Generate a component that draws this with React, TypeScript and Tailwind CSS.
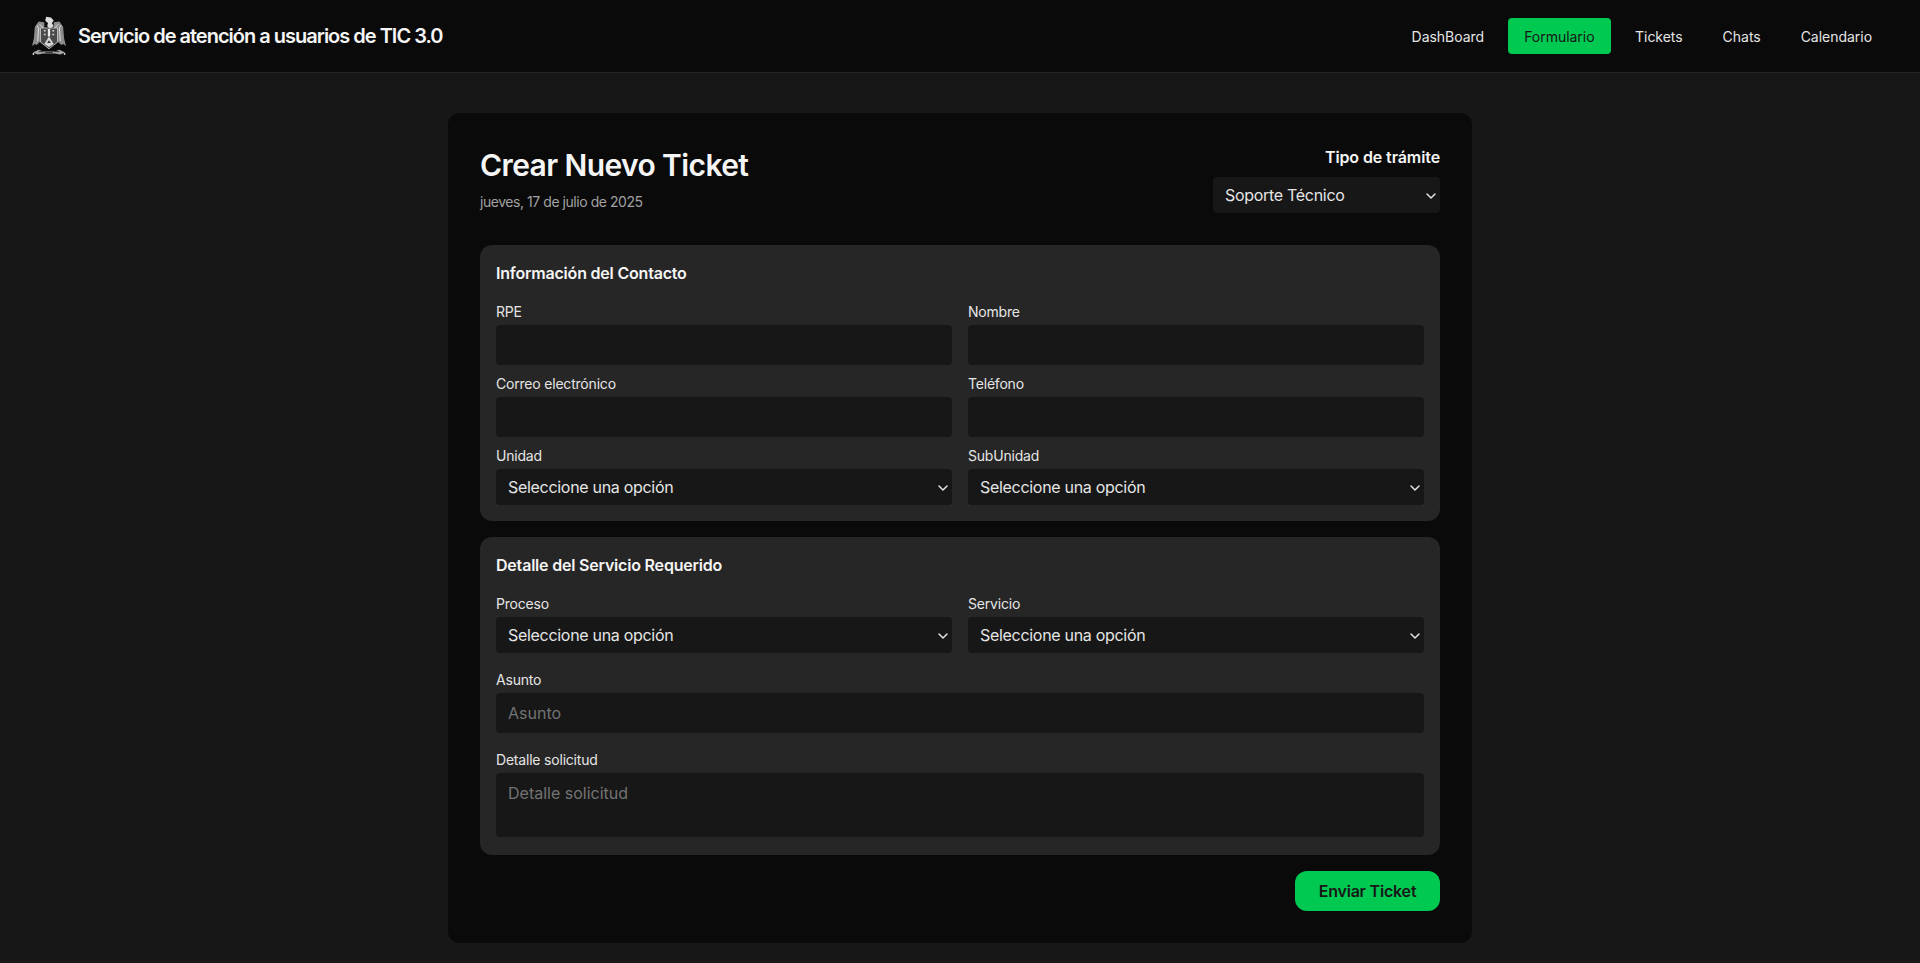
import { ChevronDown } from "lucide-react";

const font = "[font-family:Inter,'Noto_Sans',sans-serif]";

const Logo = () => (
  <svg viewBox="0 0 36 42" className="w-[34px] h-[41px] shrink-0" aria-hidden="true">
    <path d="M15 0l5 1 3 3-2 3 2 3-4 3-3-3 1-3-3-3z" fill="#dcdcdc" />
    <path d="M13 6L7 5 3 11 2 23 0 31l3-2 2 1 3-3 5-12z" fill="#8c8c8c" />
    <path d="M23 6l6-1 4 6 1 12 2 8-3-2-2 1-3-3-5-12z" fill="#8c8c8c" />
    <path d="M5 9l2 3-1 14M8 8l3 3-1 13M31 9l-2 3 1 14M28 8l-3 3 1 13" stroke="#e0e0e0" strokeWidth="1" fill="none" />
    <path d="M9 12h18v15l-9 7-9-7z" fill="#4a4a4a" stroke="#bdbdbd" strokeWidth="1" />
    <path d="M18 13v8" stroke="#ececec" strokeWidth="2.4" />
    <path d="M12.5 15h2M21.5 15h2M12.5 19h2M21.5 19h2" stroke="#d4d4d4" strokeWidth="1.6" />
    <path d="M13 29l5-8 5 8-5 3z" fill="#d4d4d4" />
    <path d="M16 28l2-3 2 3z" fill="#2c2c2c" />
    <path d="M1 38l6-3 5 2h12l5-2 6 3-5 2-6-1H12l-6 1z" fill="#a8a8a8" />
    <path d="M7 37h5M24 37h5M14 38h8" stroke="#2c2c2c" strokeWidth="1" />
    <circle cx="1.5" cy="39.5" r="1" fill="#ddd" />
    <circle cx="34.5" cy="39.5" r="1" fill="#ddd" />
  </svg>
);

const navItems = ["DashBoard", "Formulario", "Tickets", "Chats", "Calendario"];

const Label = ({ children }: { children: string }) => (
  <label className="block text-sm leading-5 tracking-[-0.2px] mb-[3px] text-neutral-200">{children}</label>
);

const inputClass = "block w-full rounded bg-neutral-900 text-base text-neutral-200 placeholder:text-neutral-500 outline-none";

const Select = ({ value }: { value: string }) => (
  <div className="relative">
    <select className={`${inputClass} h-9 appearance-none px-3 tracking-[-0.3px]`}>
      <option>{value}</option>
    </select>
    <ChevronDown className="absolute right-px top-[11px] w-4 h-4 text-neutral-200 pointer-events-none" strokeWidth={2.2} />
  </div>
);

const TextField = ({ label, placeholder }: { label: string; placeholder?: string }) => (
  <div>
    <Label>{label}</Label>
    <input className={`${inputClass} h-10 px-3`} placeholder={placeholder} />
  </div>
);

const SelectField = ({ label }: { label: string }) => (
  <div>
    <Label>{label}</Label>
    <Select value="Seleccione una opción" />
  </div>
);

export default function App() {
  return (
    <div className={`min-h-screen bg-neutral-900 text-white ${font}`}>
      <header className="h-[73px] bg-neutral-950 border-b border-neutral-800 flex items-center justify-between pl-8 pr-[32px]">
        <div className="flex items-center gap-3">
          <Logo />
          <h1 className="text-xl font-semibold tracking-[-1px] text-neutral-100">Servicio de atención a usuarios de TIC 3.0</h1>
        </div>
        <nav className="flex items-center gap-2">
          {navItems.map((item) =>
            item === "Formulario" ? (
              <a key={item} className="h-9 flex items-center pl-4 pr-[16.5px] pt-px rounded bg-green-500 text-sm tracking-[-0.03px] text-neutral-900">{item}</a>
            ) : (
              <a key={item} className="h-9 flex items-center px-4 pt-px rounded text-sm tracking-[-0.03px] text-neutral-200">{item}</a>
            )
          )}
        </nav>
      </header>

      <main className="pt-10 pb-5">
        <form className="mx-auto max-w-5xl rounded-xl bg-neutral-950 p-8">
          <div className="flex justify-between mb-8">
            <div className="pt-[2px]">
              <h2 className="text-3xl font-semibold tracking-[-0.6px] text-neutral-100 mb-[9px]">Crear Nuevo Ticket</h2>
              <p className="text-sm tracking-[-0.45px] text-neutral-400">jueves, 17 de julio de 2025</p>
            </div>
            <div className="w-[227px]">
              <p className="text-base font-semibold tracking-[-0.1px] text-right text-neutral-100 mb-2">Tipo de trámite</p>
              <Select value="Soporte Técnico" />
            </div>
          </div>

          <section className="rounded-xl bg-neutral-800 p-4 mb-4">
            <h3 className="text-base font-semibold tracking-[-0.2px] text-neutral-100 mb-[17px]">Información del Contacto</h3>
            <div className="grid grid-cols-2 gap-x-4 gap-y-[9px]">
              <TextField label="RPE" />
              <TextField label="Nombre" />
              <TextField label="Correo electrónico" />
              <TextField label="Teléfono" />
              <SelectField label="Unidad" />
              <SelectField label="SubUnidad" />
            </div>
          </section>

          <section className="rounded-xl bg-neutral-800 px-4 pt-4 pb-[18px] mb-4">
            <h3 className="text-base font-semibold tracking-[-0.2px] text-neutral-100 mb-[17px]">Detalle del Servicio Requerido</h3>
            <div className="grid grid-cols-2 gap-x-4">
              <SelectField label="Proceso" />
              <SelectField label="Servicio" />
            </div>
            <div className="mt-[17px]">
              <TextField label="Asunto" placeholder="Asunto" />
            </div>
            <div className="mt-[17px]">
              <Label>Detalle solicitud</Label>
              <textarea className={`${inputClass} h-16 px-3 py-2 resize-none`} placeholder="Detalle solicitud" />
            </div>
          </section>

          <div className="flex justify-end">
            <button type="button" className="h-10 w-[145px] rounded-xl bg-green-500 text-base font-semibold tracking-[-0.2px] text-neutral-900">Enviar Ticket</button>
          </div>
        </form>
      </main>
    </div>
  );
}
